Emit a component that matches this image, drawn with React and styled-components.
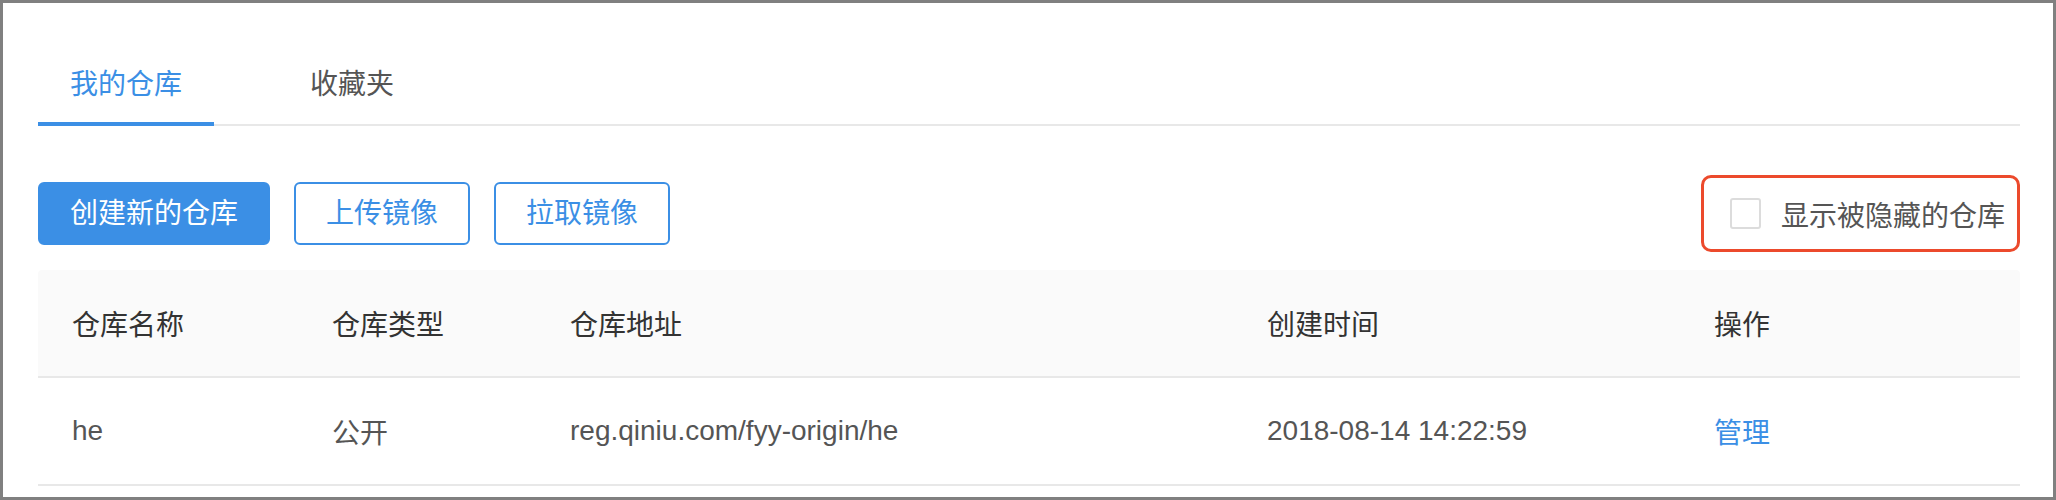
import React from 'react';
import styled, { createGlobalStyle } from 'styled-components';

const GlobalStyle = createGlobalStyle`
  html, body {
    margin: 0;
    padding: 0;
    background: #ffffff;
  }
  * {
    box-sizing: border-box;
  }
`;

const Frame = styled.div`
  width: 2056px;
  height: 500px;
  border: 3px solid #808080;
  padding: 0 33px 0 35px;
  background: #ffffff;
  font-family: "Liberation Sans", "Noto Sans CJK SC", sans-serif;
  font-size: 28px;
  color: #555555;
  overflow: hidden;
`;

const TabBar = styled.div`
  display: flex;
  margin-top: 42px;
  border-bottom: 2px solid #e8e8e8;
`;

const Tab = styled.div`
  position: relative;
  padding: 20px 32px 19px;
  margin-right: 64px;
  line-height: 40px;
  color: ${(p) => (p.$active ? '#3b8fe5' : '#555555')};

  &::after {
    content: '';
    display: ${(p) => (p.$active ? 'block' : 'none')};
    position: absolute;
    left: 0;
    right: 0;
    bottom: -2px;
    height: 4px;
    background: #3b8fe5;
  }
`;

const Toolbar = styled.div`
  display: flex;
  align-items: center;
  justify-content: space-between;
  margin-top: 49px;
  height: 77px;
`;

const ButtonGroup = styled.div`
  display: flex;
  gap: 24px;
`;

const Button = styled.button`
  height: 63px;
  padding: 0 30px;
  border: 2px solid #3b8fe5;
  border-radius: 6px;
  font-family: inherit;
  font-size: 28px;
  line-height: 1;
  cursor: pointer;
  background: ${(p) => (p.$primary ? '#3b8fe5' : '#ffffff')};
  color: ${(p) => (p.$primary ? '#ffffff' : '#3b8fe5')};
`;

const Highlight = styled.label`
  display: flex;
  align-items: center;
  gap: 20px;
  height: 77px;
  padding: 0 12px 0 26px;
  border: 3px solid #ec4a2c;
  border-radius: 10px;
  color: #555555;
  cursor: pointer;
`;

const Checkbox = styled.span`
  display: block;
  width: 31px;
  height: 31px;
  border: 2px solid #dcdcdc;
  border-radius: 3px;
  background: #ffffff;
`;

const Table = styled.div`
  margin-top: 18px;
`;

const Row = styled.div`
  display: grid;
  grid-template-columns: 260px 238px 697px 447px 1fr;
  height: 108px;
  align-items: center;
  border-bottom: 2px solid #e8e8e8;
  background: ${(p) => (p.$head ? '#fafafa' : '#ffffff')};
  color: ${(p) => (p.$head ? '#333333' : '#555555')};
  border-radius: ${(p) => (p.$head ? '4px 4px 0 0' : '0')};
`;

const Cell = styled.div`
  padding-left: 34px;
  white-space: nowrap;
`;

const Link = styled.a`
  color: #3b8fe5;
  text-decoration: none;
  cursor: pointer;
`;

const columns = ['仓库名称', '仓库类型', '仓库地址', '创建时间', '操作'];

const repos = [
  { name: 'he', type: '公开', url: 'reg.qiniu.com/fyy-origin/he', time: '2018-08-14 14:22:59' },
];

export default function App() {
  return (
    <>
      <GlobalStyle />
      <Frame>
        <TabBar>
          <Tab $active>我的仓库</Tab>
          <Tab>收藏夹</Tab>
        </TabBar>

        <Toolbar>
          <ButtonGroup>
            <Button $primary>创建新的仓库</Button>
            <Button>上传镜像</Button>
            <Button>拉取镜像</Button>
          </ButtonGroup>
          <Highlight>
            <Checkbox />
            显示被隐藏的仓库
          </Highlight>
        </Toolbar>

        <Table>
          <Row $head>
            {columns.map((c) => (
              <Cell key={c}>{c}</Cell>
            ))}
          </Row>
          {repos.map((r) => (
            <Row key={r.name}>
              <Cell>{r.name}</Cell>
              <Cell>{r.type}</Cell>
              <Cell>{r.url}</Cell>
              <Cell>{r.time}</Cell>
              <Cell>
                <Link>管理</Link>
              </Cell>
            </Row>
          ))}
        </Table>
      </Frame>
    </>
  );
}
